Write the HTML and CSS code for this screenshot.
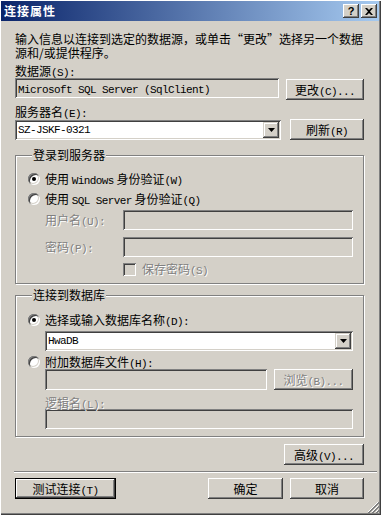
FILE: index.html
```html
<!DOCTYPE html>
<html lang="zh-CN">
<head>
  <meta charset="UTF-8">
  <title>连接属性</title>
  <link rel="stylesheet" href="styles.css">
</head>
<body>
  <div class="window">
    <div class="titlebar">
      <span class="title">连接属性</span>
      <div class="title-buttons">
        <span class="tbtn help">?</span>
        <span class="tbtn">
          <svg width="8" height="7" viewBox="0 0 8 7"><path d="M0 0h2l2 2 2-2h2L5 3.5 8 7H6L4 5 2 7H0l3-3.5z" fill="#000"/></svg>
        </span>
      </div>
    </div>

    <div class="content">
      <p class="intro">输入信息以连接到选定的数据源，或单击“更改”选择另一个数据<br>源和/或提供程序。</p>

      <div class="label label-top">数据源<span class="en">(S):</span></div>
      <div class="row row-source">
        <div class="field readonly"><span class="en">Microsoft SQL Server (SqlClient)</span></div>
        <button class="btn btn-change">更改<span class="en">(C)...</span></button>
      </div>

      <div class="label label-server">服务器名<span class="en">(E):</span></div>
      <div class="row row-server">
        <div class="combo">
          <span class="combo-text en">SZ-JSKF-0321</span>
          <span class="drop"><svg width="7" height="4" viewBox="0 0 7 4"><path d="M0 0h7L3.5 4z" fill="#000"/></svg></span>
        </div>
        <button class="btn btn-refresh">刷新<span class="en">(R)</span></button>
      </div>

      <fieldset class="group group-login">
        <legend>登录到服务器</legend>
        <div class="option">
          <span class="radio checked"></span>
          <span>使用 <span class="en">Windows</span> 身份验证<span class="en">(W)</span></span>
        </div>
        <div class="option option-second">
          <span class="radio"></span>
          <span>使用 <span class="en">SQL Server</span> 身份验证<span class="en">(Q)</span></span>
        </div>
        <div class="field-row field-row-user">
          <span class="label disabled">用户名<span class="en">(U):</span></span>
          <div class="field disabled-field"></div>
        </div>
        <div class="field-row field-row-pass">
          <span class="label disabled">密码<span class="en">(P):</span></span>
          <div class="field disabled-field"></div>
        </div>
        <div class="check-row">
          <span class="checkbox"></span>
          <span class="disabled">保存密码<span class="en">(S)</span></span>
        </div>
      </fieldset>

      <fieldset class="group group-db">
        <legend>连接到数据库</legend>
        <div class="option">
          <span class="radio checked"></span>
          <span>选择或输入数据库名称<span class="en">(D):</span></span>
        </div>
        <div class="combo combo-db">
          <span class="combo-text en">HwaDB</span>
          <span class="drop"><svg width="7" height="4" viewBox="0 0 7 4"><path d="M0 0h7L3.5 4z" fill="#000"/></svg></span>
        </div>
        <div class="option option-attach">
          <span class="radio"></span>
          <span>附加数据库文件<span class="en">(H):</span></span>
        </div>
        <div class="row row-attach">
          <div class="field disabled-field"></div>
          <button class="btn btn-browse disabled">浏览<span class="en">(B)...</span></button>
        </div>
        <div class="label disabled label-logical">逻辑名<span class="en">(L):</span></div>
        <div class="field disabled-field field-logical"></div>
      </fieldset>

      <div class="advanced-row">
        <button class="btn btn-advanced">高级<span class="en">(V)...</span></button>
      </div>

      <div class="separator"></div>

      <div class="footer">
        <button class="btn btn-test">测试连接<span class="en">(T)</span></button>
        <div class="footer-right">
          <button class="btn btn-ok">确定</button>
          <button class="btn btn-cancel">取消</button>
        </div>
      </div>
    </div>

    <svg class="grip" width="12" height="12" viewBox="0 0 12 12">
      <path d="M11 1L1 11M11 5L5 11M11 9L9 11" stroke="#fff" stroke-width="1"/>
      <path d="M12 1L1 12M12 2L2 12M12 5L5 12M12 6L6 12M12 9L9 12M12 10L10 12" stroke="#808080" stroke-width="1"/>
    </svg>
  </div>
</body>
</html>
```

FILE: styles.css
```css
body {
  margin: 0;
  font-family: "Noto Sans CJK SC", sans-serif;
  font-size: 12px;
  line-height: 14px;
  color: #000;
}

.en {
  font-family: "Liberation Mono", monospace;
  font-size: 11px;
  line-height: 8px;
  letter-spacing: -0.6px;
}

.window {
  position: relative;
  width: 381px;
  height: 515px;
  box-sizing: border-box;
  background-color: #d4d0c8;
  box-shadow: inset 1px 1px 0 #fff, inset -1px -1px 0 #404040, inset -2px -2px 0 #808080;
  overflow: hidden;
}

.titlebar {
  margin: 1px 2px 0 1px;
  height: 20px;
  padding: 0 2px 0 3px;
  background: linear-gradient(to right, #0a246a, #a6caf0);
  display: flex;
  align-items: center;
  justify-content: space-between;
}

.title {
  color: #fff;
  font-weight: bold;
  letter-spacing: 1px;
}

.title-buttons {
  display: flex;
  gap: 2px;
}

.tbtn {
  width: 16px;
  height: 14px;
  box-sizing: border-box;
  background-color: #d4d0c8;
  box-shadow: inset -1px -1px 0 #404040, inset 1px 1px 0 #fff, inset -2px -2px 0 #808080;
  display: flex;
  align-items: center;
  justify-content: center;
}

.help {
  font-family: "Liberation Sans", sans-serif;
  font-weight: bold;
  font-size: 11px;
  line-height: 12px;
}

.content {
  padding: 0 17px 0 15px;
}

.intro {
  margin: 11px 0 0;
}

.label-top {
  margin-top: 4px;
}

.row {
  display: flex;
  align-items: flex-start;
}

.field {
  height: 20px;
  box-sizing: border-box;
  padding: 3px 3px 0;
  background-color: #fff;
  box-shadow: inset 1px 1px 0 #808080, inset -1px -1px 0 #fff, inset 2px 2px 0 #404040, inset -2px -2px 0 #d4d0c8;
  white-space: nowrap;
  overflow: hidden;
  line-height: 14px;
}

.readonly,
.disabled-field {
  background-color: #d4d0c8;
}

.row-source .field {
  flex: 1;
}

.btn {
  height: 21px;
  padding: 0;
  border: none;
  background-color: #d4d0c8;
  font-family: inherit;
  font-size: 12px;
  line-height: 14px;
  color: #000;
  box-shadow: inset -1px -1px 0 #404040, inset 1px 1px 0 #fff, inset -2px -2px 0 #808080;
}

.btn-change {
  width: 78px;
  margin-left: 7px;
  margin-top: 1px;
}

.label-server {
  margin-top: 5px;
}

.row-server {
  margin-top: 1px;
}

.combo {
  flex: 1;
  height: 20px;
  box-sizing: border-box;
  padding: 2px;
  background-color: #fff;
  box-shadow: inset 1px 1px 0 #808080, inset -1px -1px 0 #fff, inset 2px 2px 0 #404040, inset -2px -2px 0 #d4d0c8;
  display: flex;
  align-items: center;
}

.combo-text {
  flex: 1;
  padding-left: 1px;
  line-height: 14px;
}

.drop {
  width: 16px;
  height: 16px;
  box-sizing: border-box;
  background-color: #d4d0c8;
  box-shadow: inset -1px -1px 0 #404040, inset 1px 1px 0 #d4d0c8, inset -2px -2px 0 #808080, inset 2px 2px 0 #fff;
  display: flex;
  align-items: center;
  justify-content: center;
}

.btn-refresh {
  width: 74px;
  margin-left: 9px;
  margin-top: -1px;
}

.group {
  margin: 0;
  padding: 0 10px 7px 11px;
  border: 1px solid #808080;
  box-shadow: inset 1px 1px 0 #fff, 1px 1px 0 #fff;
  width: 349px;
  box-sizing: border-box;
}

.group legend {
  padding: 0 1px;
  margin-left: 5px;
  background-color: #d4d0c8;
}

.group-login {
  margin-top: 8px;
}

.option {
  display: flex;
  align-items: center;
  gap: 5px;
  height: 14px;
}

.group-login .option:first-of-type {
  margin-top: 10px;
}

.option-second {
  margin-top: 6px;
}

.radio {
  position: relative;
  width: 12px;
  height: 12px;
  margin-left: 1px;
  border-radius: 50%;
  background-color: #fff;
  box-shadow: inset 1px 1px 0 #808080, inset -1px -1px 0 #fff, inset 2px 2px 0 #404040, inset -1px -1px 0 1px #d4d0c8;
}

.radio.checked::after {
  content: "";
  position: absolute;
  left: 4px;
  top: 4px;
  width: 4px;
  height: 4px;
  border-radius: 50%;
  background-color: #000;
}

.field-row {
  display: flex;
  align-items: center;
  padding-left: 18px;
}

.field-row .label {
  width: 78px;
}

.field-row .field {
  flex: 1;
}

.field-row-user {
  margin-top: 4px;
}

.field-row-pass {
  margin-top: 7px;
}

.disabled {
  color: #808080;
  text-shadow: 1px 1px 0 #fff;
}

.check-row {
  display: flex;
  align-items: center;
  gap: 6px;
  height: 14px;
  margin-top: 5px;
  padding-left: 96px;
}

.checkbox {
  width: 13px;
  height: 13px;
  background-color: #d4d0c8;
  box-shadow: inset 1px 1px 0 #808080, inset -1px -1px 0 #fff, inset 2px 2px 0 #404040, inset -2px -2px 0 #d4d0c8;
}

.group-db {
  margin-top: 4px;
}

.group-db .option:first-of-type {
  margin-top: 11px;
}

.combo-db {
  margin: 4px 0 0 18px;
}

.option-attach {
  margin-top: 4px;
}

.row-attach {
  margin-left: 18px;
}

.row-attach .field {
  flex: 1;
  height: 21px;
}

.btn-browse {
  width: 79px;
  margin-left: 7px;
}

.btn.disabled {
  color: #808080;
  text-shadow: 1px 1px 0 #fff;
}

.label-logical {
  margin: 6px 0 0 18px;
}

.field-logical {
  margin: -1px 0 0 18px;
}

.advanced-row {
  display: flex;
  justify-content: flex-end;
  margin-top: 7px;
}

.btn-advanced {
  width: 80px;
}

.separator {
  margin: 6px -13px 0 -1px;
  border-top: 1px solid #808080;
  border-bottom: 1px solid #fff;
  height: 0;
}

.footer {
  display: flex;
  justify-content: space-between;
  margin-top: 5px;
}

.footer-right {
  display: flex;
  gap: 7px;
}

.btn-test {
  width: 101px;
  box-shadow: inset 0 0 0 1px #000, inset -2px -2px 0 #404040, inset 2px 2px 0 #fff, inset -3px -3px 0 #808080;
}

.btn-ok {
  width: 75px;
}

.btn-cancel {
  width: 74px;
}

.grip {
  position: absolute;
  right: 2px;
  bottom: 2px;
}
```
